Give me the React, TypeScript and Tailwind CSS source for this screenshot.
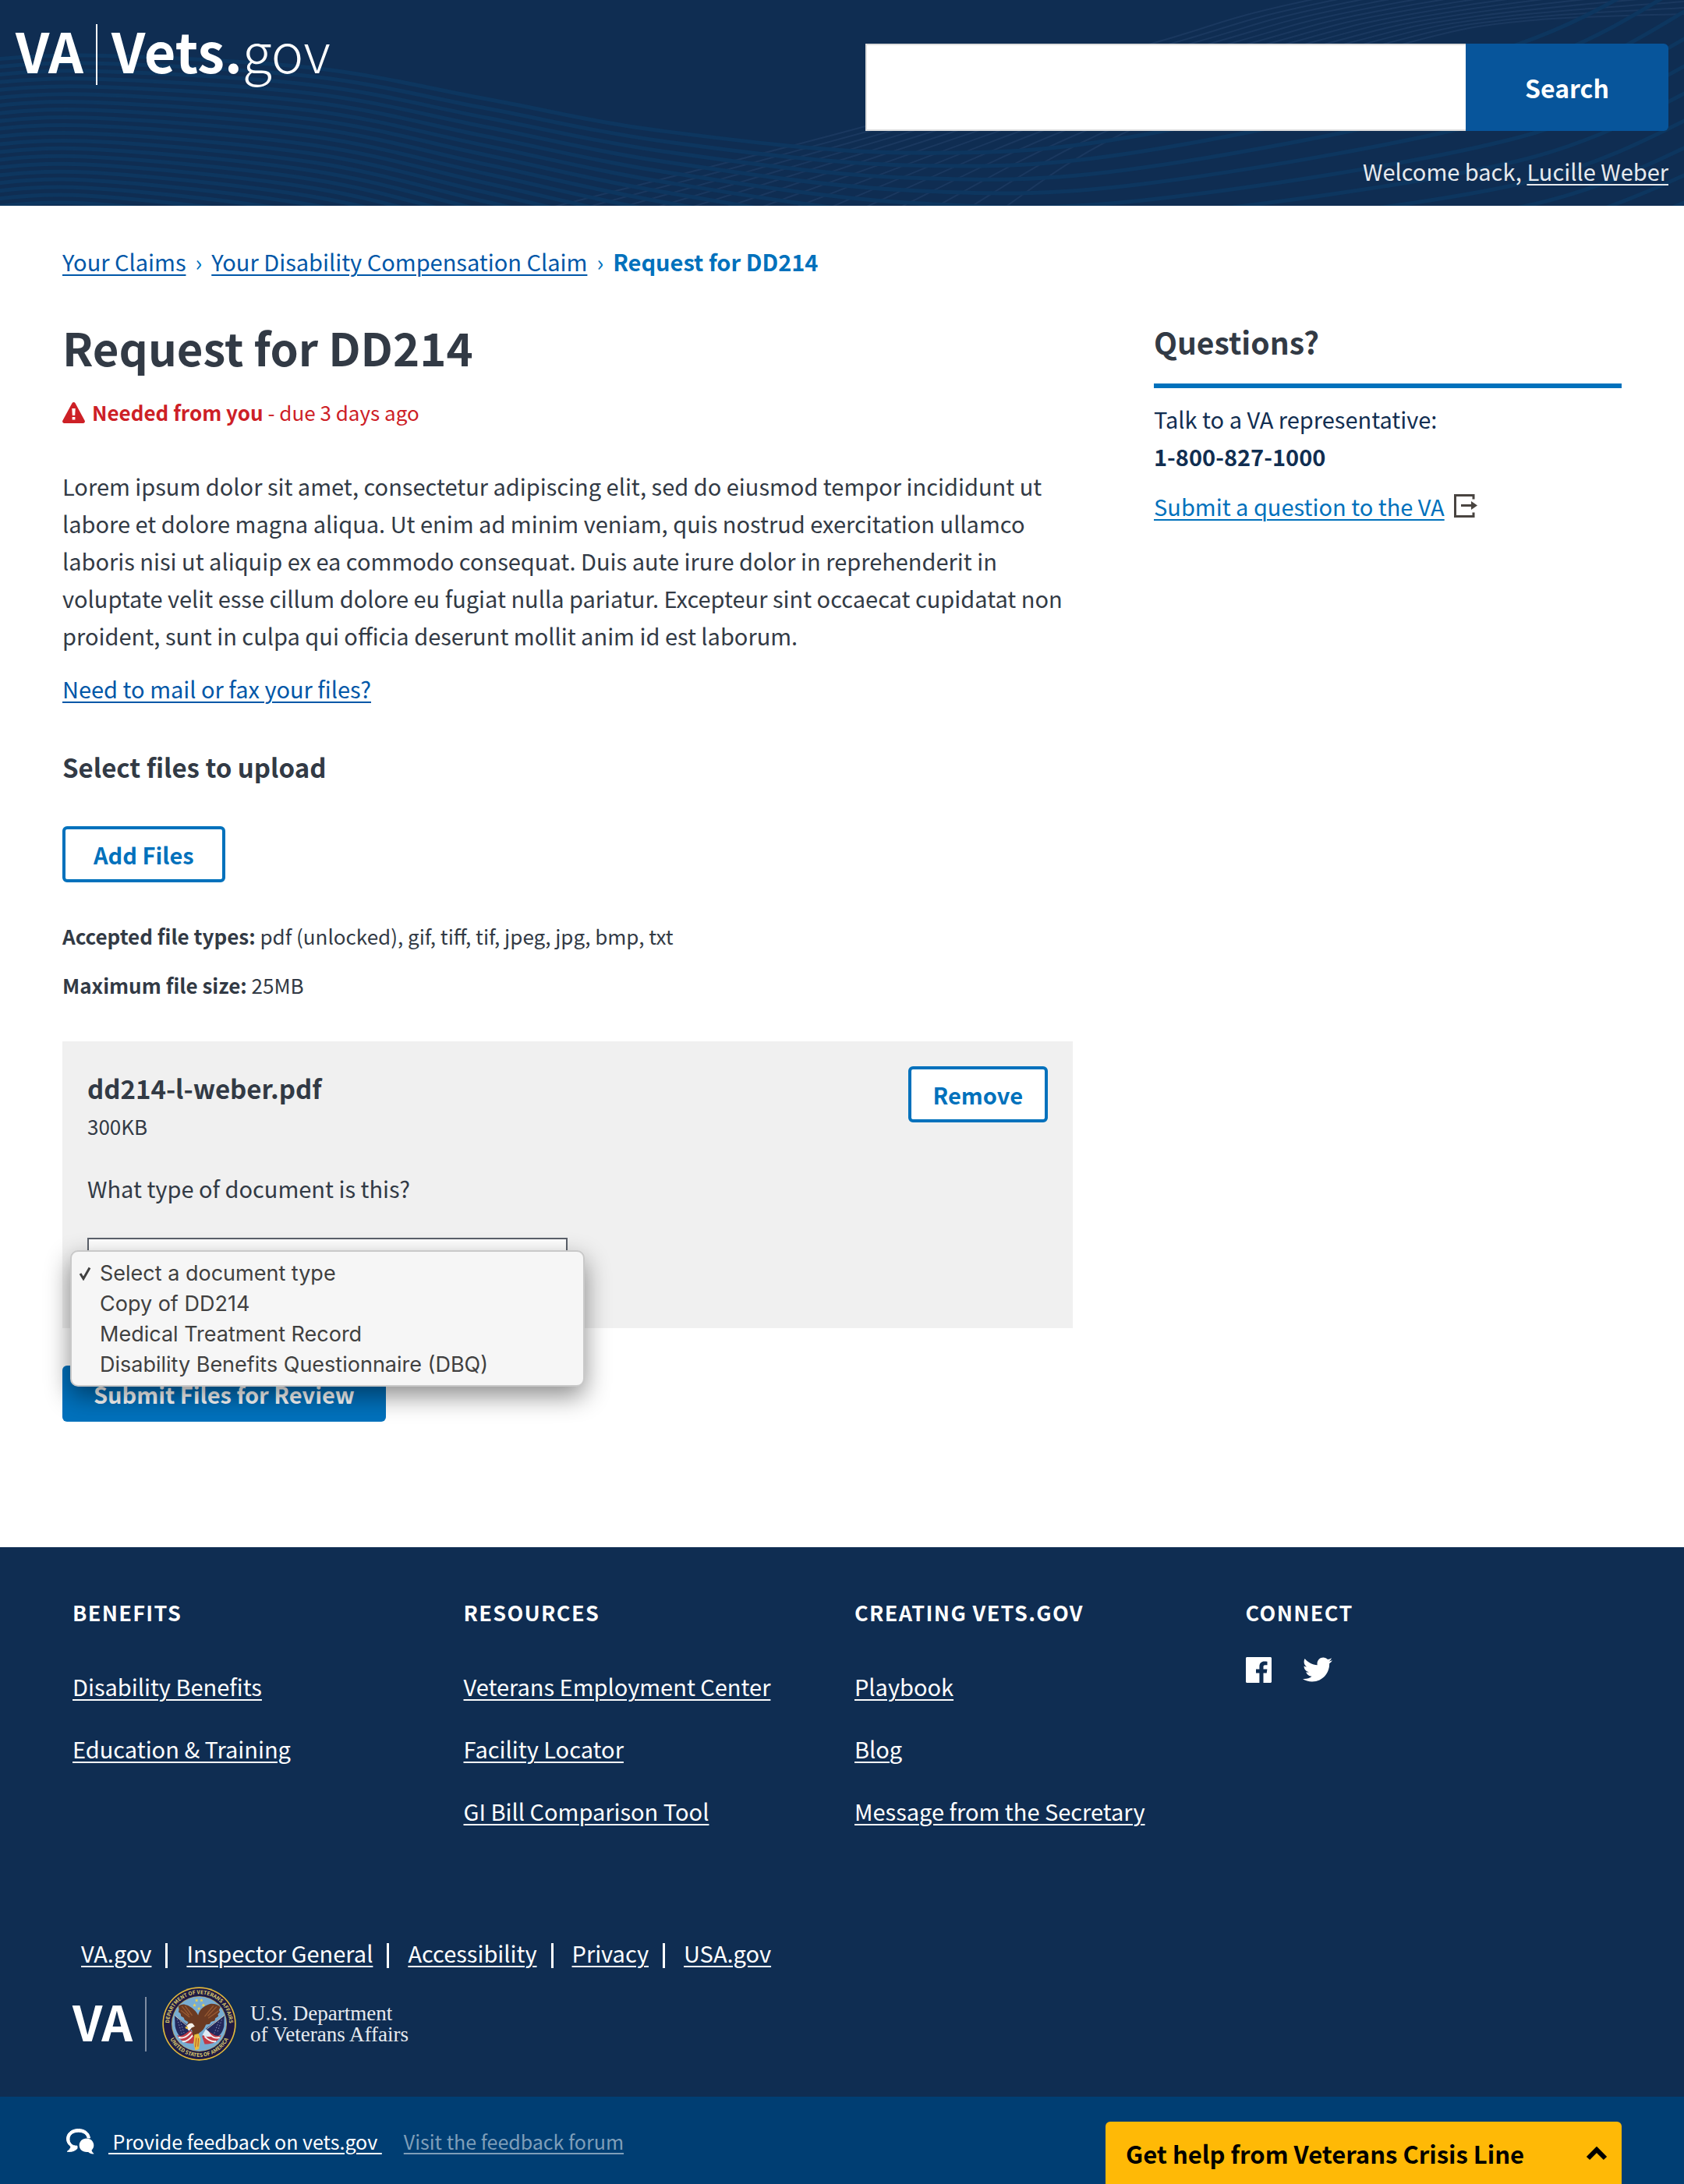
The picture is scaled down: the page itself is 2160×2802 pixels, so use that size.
import type { ReactNode } from 'react';
import { FaTwitter } from 'react-icons/fa';

type Point = [number, number];

/* Smooth path through a list of points (Catmull-Rom to cubic Bezier). */
function smooth(points: Point[]): string {
  let d = `M${points[0][0]} ${points[0][1]}`;
  for (let i = 0; i < points.length - 1; i++) {
    const a = points[i - 1] ?? points[i];
    const b = points[i];
    const c = points[i + 1];
    const e = points[i + 2] ?? c;
    d += `C${b[0] + (c[0] - a[0]) / 6} ${b[1] + (c[1] - a[1]) / 6} ${c[0] - (e[0] - b[0]) / 6} ${c[1] - (e[1] - b[1]) / 6} ${c[0]} ${c[1]}`;
  }
  return d;
}

const wideWaves = Array.from({ length: 22 }, (_, k) =>
  smooth([
    [-40, 79 + 10 * k],
    [110, 71 + 10 * k],
    [400, 87 + 11 * k],
    [624, 127 + 12 * k],
    [849, 168 + 13 * k],
    [1163, 196 + 16 * k],
    [1466, 173 + 21 * k],
    [1949, 56 + 30 * k],
    [2200, -80 + 36 * k],
  ]),
);

const fineWaves = Array.from({ length: 14 }, (_, j) =>
  smooth([
    [660 + 47 * j, 278],
    [1110 + 27 * j, 162],
    [1477 + 25 * j, 56],
    [1680 + 22 * j, 2 * j],
    [2200, -100 + 9 * j],
  ]),
);

function HeaderWaves() {
  return (
    <svg className="absolute inset-0 size-full" viewBox="0 0 2160 264" preserveAspectRatio="xMidYMid slice" fill="none" aria-hidden="true">
      {fineWaves.map((d) => (
        <path key={d} d={d} stroke="#1a385f" strokeWidth="2" />
      ))}
      {wideWaves.map((d) => (
        <path key={d} d={d} stroke="#0d365f" strokeWidth="5" />
      ))}
    </svg>
  );
}

function Header() {
  return (
    <header className="relative flex items-start justify-between gap-8 overflow-hidden bg-[#0f2d52] px-5 pb-[21px] text-white">
      <HeaderWaves />
      <a href="#home" className="relative mt-7 flex shrink-0 items-start text-[70px] leading-[71px]">
        <span className="font-bold">VA</span>
        <span className="mt-[3px] mr-[18px] ml-4 h-[78px] w-[2px] bg-white" />
        <span>
          <b>Vets.</b>
          <span className="font-light">gov</span>
        </span>
      </a>
      <div className="relative mt-14 w-full max-w-[1030px]">
        <form className="flex h-28" onSubmit={(e) => e.preventDefault()}>
          <input
            type="search"
            aria-label="Search"
            className="min-w-0 flex-1 border-2 border-r-0 border-[#dedede] bg-white px-6 text-[29px] text-[#323a45] outline-none"
          />
          <button type="submit" className="w-[260px] rounded-r-md bg-[#07559b] text-[32px] font-bold">
            Search
          </button>
        </form>
        <p className="mt-[27px] text-right text-[#e7eaee]">
          Welcome back,{' '}
          <a href="#account" className="underline decoration-2 underline-offset-4">
            Lucille Weber
          </a>
        </p>
      </div>
    </header>
  );
}

function WarningIcon() {
  return (
    <svg className="h-[27px] w-[29px]" viewBox="0 0 29 27" aria-hidden="true">
      <path d="M14.500 0c.8 0 1.500.4 1.900 1.100l12.200 22.500c.9 1.600-.2 3.400-1.900 3.400H2.300c-1.700 0-2.800-1.800-1.900-3.400L12.600 1.100C13 .4 13.700 0 14.500 0z" fill="#cd2026" />
      <path d="M12.300 8h4.400l-.5 9h-3.400zM12.600 19h3.800v3.600h-3.800z" fill="#fff" />
    </svg>
  );
}

function ExitIcon() {
  return (
    <svg className="h-[30px] w-[31px]" viewBox="0 0 31 30" fill="none" aria-hidden="true">
      <path d="M25 6.500V1.500H1.500v27H25v-5" stroke="#494440" strokeWidth="3" />
      <path d="M9 14.500h15" stroke="#494440" strokeWidth="3" />
      <path d="M22 9l8 5.500-8 5.500z" fill="#494440" />
    </svg>
  );
}

function OutlineButton({ children, wide = false }: { children: ReactNode; wide?: boolean }) {
  return (
    <button
      type="button"
      className={`h-[72px] rounded-md border-4 border-[#0071bc] bg-white font-bold text-[#0071bc] ${wide ? 'px-9' : 'px-7'}`}
    >
      {children}
    </button>
  );
}

const documentTypes = [
  'Select a document type',
  'Copy of DD214',
  'Medical Treatment Record',
  'Disability Benefits Questionnaire (DBQ)',
];

function DocumentTypeMenu() {
  return (
    <ul
      role="listbox"
      aria-label="Document types"
      className="absolute top-4 -left-[22px] z-10 w-[660px] rounded-[10px] border-2 border-[#c9c9c9] bg-[#f6f6f6] pt-2 pb-[7px] font-['Inter',sans-serif] text-[27px] leading-[39px] text-[#404040] shadow-[0_12px_32px_rgba(0,0,0,0.45)]"
    >
      {documentTypes.map((label, i) => (
        <li key={label} role="option" aria-selected={i === 0} className="flex items-center pl-[9px]">
          <span className="w-[27px]">
            {i === 0 && (
              <svg className="h-[18px] w-[16px]" viewBox="0 0 16 18" fill="none" aria-hidden="true">
                <path d="M2 9l4 6.500L14 1.500" stroke="#404040" strokeWidth="3" />
              </svg>
            )}
          </span>
          {label}
        </li>
      ))}
    </ul>
  );
}

function FileCard() {
  return (
    <section className="mt-[52px] flex items-start justify-between bg-[#f0f0f0] px-8 pb-8">
      <div className="pt-9">
        <h3 className="text-[33px] font-bold">dd214-l-weber.pdf</h3>
        <p className="mt-[5px] text-[26px] leading-10">300KB</p>
        <label htmlFor="doc-type" className="mt-[35px] block">
          What type of document is this?
        </label>
        <div className="relative mt-10 w-[616px]">
          <select id="doc-type" className="block h-[84px] w-full appearance-none border-2 border-[#5b616b] bg-white px-4">
            {documentTypes.map((label) => (
              <option key={label}>{label}</option>
            ))}
          </select>
          <DocumentTypeMenu />
        </div>
      </div>
      <div className="pt-8">
        <OutlineButton>Remove</OutlineButton>
      </div>
    </section>
  );
}

function Breadcrumbs() {
  return (
    <nav aria-label="Breadcrumb" className="flex text-[#0071bc]">
      <a href="#claims" className="text-[#0057a8] underline decoration-2 underline-offset-4">
        Your Claims
      </a>
      <span className="mx-3">›</span>
      <a href="#claim" className="text-[#0057a8] underline decoration-2 underline-offset-4">
        Your Disability Compensation Claim
      </a>
      <span className="mx-3">›</span>
      <b>Request for DD214</b>
    </nav>
  );
}

function Main() {
  return (
    <main className="px-20 pt-[47px] pb-[161px] text-[#323a45]">
      <Breadcrumbs />
      <div className="mt-[50px] flex items-start gap-[104px]">
        <div className="min-w-0 flex-1">
          <h1 className="text-[58px] leading-[72px] font-bold">Request for DD214</h1>
          <p className="mt-7 flex items-center text-[26px] leading-10 text-[#cd2026]">
            <WarningIcon />
            <span className="ml-[9px]">
              <b>Needed from you</b> - due 3 days ago
            </span>
          </p>
          <p className="mt-[50px]">
            Lorem ipsum dolor sit amet, consectetur adipiscing elit, sed do eiusmod tempor incididunt ut labore et dolore
            magna aliqua. Ut enim ad minim veniam, quis nostrud exercitation ullamco laboris nisi ut aliquip ex ea commodo
            consequat. Duis aute irure dolor in reprehenderit in voluptate velit esse cillum dolore eu fugiat nulla
            pariatur. Excepteur sint occaecat cupidatat non proident, sunt in culpa qui officia deserunt mollit anim id
            est laborum.
          </p>
          <p className="mt-5">
            <a href="#mail" className="text-[#0057a8] underline decoration-2 underline-offset-4">
              Need to mail or fax your files?
            </a>
          </p>
          <h2 className="mt-[53px] mb-[52px] text-[33px] font-bold">Select files to upload</h2>
          <OutlineButton wide>Add Files</OutlineButton>
          <p className="mt-[49px] text-[26px] leading-10">
            <b>Accepted file types:</b> pdf (unlocked), gif, tiff, tif, jpeg, jpg, bmp, txt
          </p>
          <p className="mt-[23px] text-[26px] leading-10">
            <b>Maximum file size:</b> 25MB
          </p>
          <FileCard />
          <button type="submit" className="mt-12 block h-[72px] rounded-md bg-[#0071bc] px-10 font-bold text-white">
            Submit Files for Review
          </button>
        </div>
        <aside className="w-[30%] pt-[5px] text-[#112e51]">
          <h2 className="border-b-[6px] border-[#0071bc] pb-[30px] text-[39px] font-bold text-[#323a45]">Questions?</h2>
          <p className="mt-[15px]">Talk to a VA representative:</p>
          <p className="font-bold">1-800-827-1000</p>
          <p className="mt-4 flex items-center gap-3">
            <a href="#ask" className="text-[#0071bc] underline decoration-2 underline-offset-4">
              Submit a question to the VA
            </a>
            <ExitIcon />
          </p>
        </aside>
      </div>
    </main>
  );
}

const footerColumns = [
  { title: 'BENEFITS', links: ['Disability Benefits', 'Education & Training'] },
  { title: 'RESOURCES', links: ['Veterans Employment Center', 'Facility Locator', 'GI Bill Comparison Tool'] },
  { title: 'CREATING VETS.GOV', links: ['Playbook', 'Blog', 'Message from the Secretary'] },
];

const siteLinks = ['VA.gov', 'Inspector General', 'Accessibility', 'Privacy', 'USA.gov'];

function FacebookIcon() {
  return (
    <svg className="size-[33px]" viewBox="0 0 33 33" aria-hidden="true">
      <path
        d="M1.500 0h30c.8 0 1.500.7 1.500 1.500v30c0 .8-.7 1.500-1.500 1.500H22.500V20.500h4.200l.7-4.900h-4.900v-3.100c0-1.400.5-2.300 2.400-2.300h2.600V5.800c-.5-.1-2-.2-3.800-.2-3.700 0-6.300 2.300-6.300 6.400v3.600h-4.400v4.900h4.400V33H1.500C.7 33 0 32.300 0 31.500v-30C0 .7.7 0 1.500 0z"
        fill="#fff"
      />
    </svg>
  );
}

const stars: Point[] = [
  [187, 107],
  [206, 107],
  [179, 126],
  [213, 126],
  [196, 139],
];

function Star({ at: [x, y] }: { at: Point }) {
  return (
    <path
      transform={`translate(${x} ${y})`}
      d="M0-7L2-2.200L7-2L3 1.300L4.400 6.500L0 3.500L-4.400 6.500L-3 1.300L-7-2L-2-2.200Z"
      fill="#f0d24a"
    />
  );
}

function Seal() {
  return (
    <svg className="size-[95px]" viewBox="54 55 286 286" role="img" aria-label="Department of Veterans Affairs seal">
      <defs>
        <path id="seal-top" d="M85 229A116 116 0 1 1 309 229" />
        <path id="seal-bottom" d="M73 222A126 126 0 0 0 321 222" />
      </defs>
      <circle cx="197" cy="198" r="142" fill="#e2b93c" />
      <circle cx="197" cy="198" r="137" fill="#1e1a45" />
      <circle cx="197" cy="198" r="107" fill="#b89a4a" />
      <circle cx="197" cy="198" r="105" fill="#78acd2" />
      {stars.map((at) => (
        <Star key={at.join()} at={at} />
      ))}
      <path d="M102 166L168 214L150 262C124 256 110 236 104 208z" fill="#23285c" />
      <path d="M294 166L224 216L246 258C272 250 286 236 293 208z" fill="#23285c" />
      <path d="M103 166l62 52M293 166l-66 52" stroke="#d8d2bd" strokeWidth="3" />
      <path d="M112 180l18 56M124 188l16 50M284 182l-18 52M272 190l-18 48" stroke="#8d93b8" strokeWidth="3" strokeDasharray="4 7" />
      <path d="M112 242c20 8 32-6 50-20l22 22-10 30c-24 2-48-6-62-32z" fill="#c13a46" />
      <path d="M282 242c-20 8-34-6-52-18l-22 22 10 30c24 2 50-4 64-34z" fill="#c13a46" />
      <path d="M118 250c20 8 34-6 48-20M132 266c18 2 30-10 40-24M276 250c-20 8-34-6-48-18M262 266c-18 2-34-8-44-20" stroke="#f3eeee" strokeWidth="6" fill="none" />
      <path
        d="M117 130c8-6 14-8 22-7 20 4 42 18 54 42 4-20 22-38 46-44 14-2 30 2 40 12l-6 12 4 6-8 10 2 8-12 8-2 9-14 4-6 9-14 2c-6 16-14 26-26 32l-10 14-14-2-4-22-16-12c-4-8-2-14 2-20l-14-8-4-9-10-5-2-11-8-6 2-8z"
        fill="#6b3a22"
      />
      <path d="M130 130l28 34M142 128l28 38M264 132l-34 36M252 128l-34 42M272 148l-40 28M126 146l34 26" stroke="#985a32" strokeWidth="4" />
      <path d="M150 206c2-8 12-12 22-9l8 11-12 5-10 12c-6-4-10-12-8-19z" fill="#f4f1ea" />
      <path d="M150 207l-8 4 5 7 8-3z" fill="#e8bd3c" />
      <path d="M222 220c10 4 18 14 24 26-12 4-26 2-36-6z" fill="#dfeaf4" />
      <path d="M178 240l16-4 8 20-6 40-14 4-6-24z" fill="#e8bd3c" />
      <path d="M186 252l-4 36M194 254l-2 32" stroke="#b54b2c" strokeWidth="3" />
      <g fill="#dcca6d" fontSize="20" fontWeight="700">
        <text textAnchor="middle">
          <textPath href="#seal-top" startOffset="50%">
            DEPARTMENT OF VETERANS AFFAIRS
          </textPath>
        </text>
        <text textAnchor="middle">
          <textPath href="#seal-bottom" startOffset="50%">
            UNITED STATES OF AMERICA
          </textPath>
        </text>
      </g>
    </svg>
  );
}

function ChatIcon() {
  return (
    <svg className="h-[34px] w-[38px]" viewBox="0 0 38 34" aria-hidden="true">
      <path
        d="M31.500 13C30.500 5.700 24.500 1.500 16.500 1.500 7.500 1.500 1.500 7 1.500 14c0 4.500 2 7.500 5.500 10-.5 2.500-2.300 4.500-4.800 6.300 6 .7 10.300-1 12.800-3.800v-3.300c-3.500 0-6-.7-8-3-1.300-1.500-2-3.500-2-5.700C5 9 9.500 5.200 16.500 5.200c6.200 0 10.700 3 11.600 7.800z"
        fill="#fff"
        stroke="#fff"
      />
      <path d="M27 13.500c5.500 0 9.300 4 9.300 8.800 0 2.800-1 4.700-2.800 6.400.4 1.800 1.700 3.300 3.300 4.600-3.300.4-5.600-.5-7.600-2.400-7 .9-11.500-3.200-11.500-8.600 0-4.800 3.800-8.800 9.300-8.800z" fill="#fff" />
    </svg>
  );
}

function Footer() {
  return (
    <footer className="bg-[#0f2d52] text-white">
      <div className="pt-16 pr-[61px] pb-[46px] pl-[93px]">
        <div className="grid grid-cols-4">
          {footerColumns.map((column) => (
            <section key={column.title}>
              <h2 className="text-[27px] leading-10 font-bold tracking-wider">{column.title}</h2>
              <ul className="mt-[50px] flex flex-col gap-8">
                {column.links.map((link) => (
                  <li key={link}>
                    <a href="#link" className="underline decoration-2 underline-offset-4">
                      {link}
                    </a>
                  </li>
                ))}
              </ul>
            </section>
          ))}
          <section>
            <h2 className="text-[27px] leading-10 font-bold tracking-wider">CONNECT</h2>
            <div className="mt-[34px] flex items-center gap-10">
              <a href="#facebook" aria-label="Facebook">
                <FacebookIcon />
              </a>
              <a href="#twitter" aria-label="Twitter">
                <FaTwitter className="size-[38px]" />
              </a>
            </div>
          </section>
        </div>
        <nav aria-label="Site" className="mt-[134px] flex items-center pl-[11px]">
          {siteLinks.map((link, i) => (
            <div key={link} className="flex items-center">
              {i > 0 && <span className="mt-2 mr-6 ml-[18px] h-8 w-[3px] bg-white" />}
              <a href="#site" className="underline decoration-2 underline-offset-4">
                {link}
              </a>
            </div>
          ))}
        </nav>
        <div className="mt-5 flex items-center">
          <span className="pb-[10px] text-[62px] leading-[64px] font-bold">VA</span>
          <span className="mr-5 ml-4 h-[70px] w-[2px] bg-[#7e8da2]" />
          <Seal />
          <p className="ml-[18px] font-['Liberation_Serif',serif] text-[27px] leading-[27px] text-[#e6eaef]">
            U.S. Department
            <br />
            of Veterans Affairs
          </p>
        </div>
      </div>
      <div className="flex items-start justify-between bg-[#003e73] pr-20 pl-[84px]">
        <div className="flex items-center pt-[33px] text-[25px]">
          <ChatIcon />
          <a href="#feedback" className="ml-[17px] whitespace-pre underline decoration-2 underline-offset-4">
            {' Provide feedback on vets.gov '}
          </a>
          <a href="#forum" className="ml-7 text-[#7f9eb9] underline decoration-2 underline-offset-4">
            Visit the feedback forum
          </a>
        </div>
        <button
          type="button"
          className="mt-8 flex h-[81px] w-[662px] items-center justify-between rounded-t-md bg-[#ffb906] pr-[18px] pl-[26px] text-[31px] font-bold text-black"
        >
          Get help from Veterans Crisis Line
          <svg className="h-[18px] w-[28px]" viewBox="0 0 28 18" fill="none" aria-hidden="true">
            <path d="M3 15L14 4L25 15" stroke="#000" strokeWidth="6" />
          </svg>
        </button>
      </div>
    </footer>
  );
}

export default function App() {
  return (
    <div className="bg-white font-['Noto_Sans_CJK_SC',sans-serif] text-[29px] leading-[48px]">
      <Header />
      <Main />
      <Footer />
    </div>
  );
}
